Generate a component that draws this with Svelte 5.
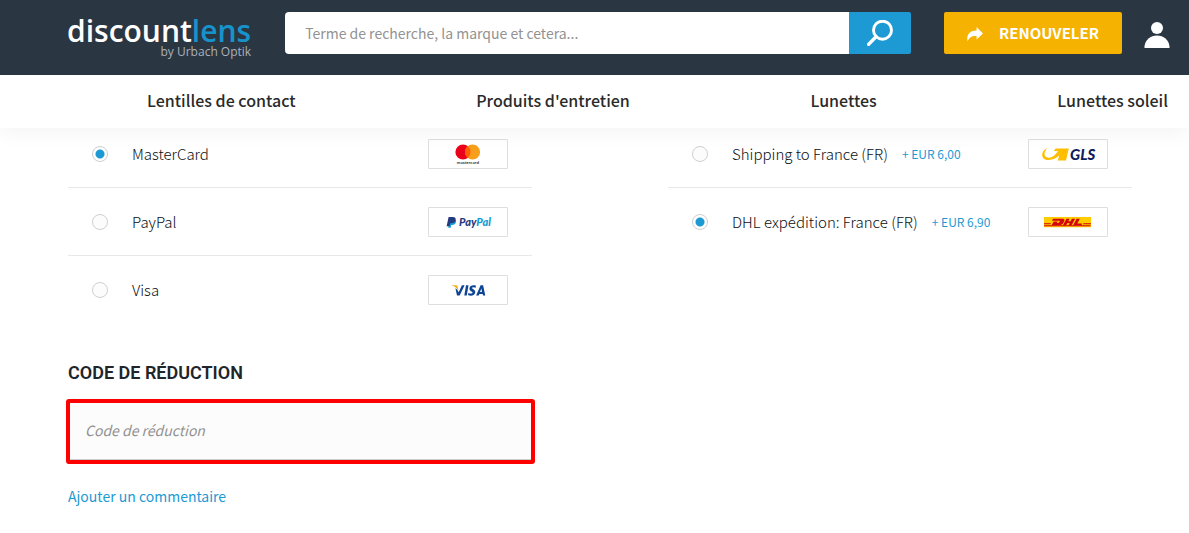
<script lang="ts">
  const menu = ['Lentilles de contact', "Produits d'entretien", 'Lunettes', 'Lunettes soleil'];

  const groups = [
    {
      name: 'payment',
      title: 'Paiement',
      options: [
        { id: 'mastercard', label: 'MasterCard', price: '' },
        { id: 'paypal', label: 'PayPal', price: '' },
        { id: 'visa', label: 'Visa', price: '' },
      ],
    },
    {
      name: 'shipping',
      title: 'Livraison',
      options: [
        { id: 'gls', label: 'Shipping to France (FR)', price: '+ EUR 6,00' },
        { id: 'dhl', label: 'DHL expédition: France (FR)', price: '+ EUR 6,90' },
      ],
    },
  ];

  let selected: Record<string, string> = $state({ payment: 'mastercard', shipping: 'dhl' });
</script>

{#snippet brand(id: string)}
  <svg class="brand" viewBox="0 0 78 28" aria-hidden="true">
    {#if id === 'mastercard'}
      <circle cx="34" cy="12" r="7.6" fill="#eb001b" />
      <circle cx="43.5" cy="12" r="7.6" fill="#f79e1b" />
      <path d="M38.75 6.1a7.6 7.6 0 0 1 0 11.8a7.6 7.6 0 0 1 0-11.8z" fill="#ff5f00" />
      <text x="38.8" y="23.5" text-anchor="middle" font-size="4.5" font-weight="700" fill="#333">mastercard</text>
    {:else if id === 'paypal'}
      <path d="M20.6 11h3.8c2.2 0 3 1.3 2.6 3.1-.4 2-1.8 2.9-3.8 2.9h-1l-.5 2.7h-2.5z" fill="#179bd7" />
      <path d="M19.6 9h4.2c2.2 0 3.2 1.2 2.8 3-.4 2.2-2 3.2-4.1 3.2h-1.3l-.7 3h-2.9z" fill="#253b80" />
      <text x="30" y="18" font-size="11" font-weight="900" font-style="italic" fill="#253b80">Pay<tspan fill="#179bd7">Pal</tspan></text>
    {:else if id === 'visa'}
      <path d="M22.8 9.2h4c1 0 1.5.4 1.7 1.2l1 4.4c-1.6-2.7-3.500-4.500-6.700-5.300z" fill="#f2ae14" />
      <path d="M26.400 12.200l1.600 7.300h2.700l4.900-10.200h-2.700l-3.200 6.900c-.700-1.800-1.800-3.200-3.300-4z" fill="#0e4595" />
      <path d="M37 9.300h2.500l-1.700 10.200h-2.500z" fill="#0e4595" />
      <path d="M47 9.700l-.4 2.100c-1.600-.7-3.500-.7-3.500.2 0 1.100 3.200 1.400 3.200 4 0 3.400-4.200 4.400-7.300 3.100l.4-2.200c2 1 4.200.8 4.200-.3s-3.200-1.400-3.200-3.900c0-3.200 3.800-4.200 6.600-3z" fill="#0e4595" />
      <path fill-rule="evenodd" d="M51.6 9.300h2.500l2.200 10.200H54l-.3-1.500h-3.300l-.7 1.500h-2.600zM52.3 12.500l-1.300 3.600h2z" fill="#0e4595" />
    {:else if id === 'gls'}
      <path d="M18.500 7.800c-7 3-7.400 12.400 1.200 12.300 4.500-.1 8.200-2.400 10.600-4.500l-1.500 4.900H37l2.800-12H26.600l-1.800 2.600h4.300c-2.800 4.500-6.600 7-9.800 6.600-5-.6-4.700-5.900-.8-9.900z" fill="#ffbe00" />
      <text x="41" y="20" font-size="15" font-weight="900" font-style="italic" fill="#0d1e5b">GLS</text>
    {:else}
      <path d="M15 9h47v10.200H15z" fill="#ffcc00" />
      <path d="M15 15.300h7l-.6 1H15zM15 17.200h46.500v1H15zM54.500 15.300H62v1h-8z" fill="#d40511" />
      <path fill-rule="evenodd" d="M24 10.800h9.300c2.400 0 2.500 1.600 1.600 3.100-1.100 2.200-2.500 3.300-5 3.300h-7.300l2.100-3.800h4l-.9 1.700h.9c1 0 1.500-.6 2-1.500.3-.7.1-.8-.7-.8h-7z" fill="#d40511" />
      <path d="M37.400 10.800h3.200l-1.300 2.500h2.300l1.300-2.500h3.200l-3.600 6.600h-3.200l1.400-2.500h-2.300L37 17.400h-3.200zM47.600 10.800h3.200l-2.500 4.600h5l-1.100 2h-8.200z" fill="#d40511" />
    {/if}
  </svg>
{/snippet}

<header>
  <div class="top">
    <a class="logo" href="#home" aria-label="discountlens by Urbach Optik">
      <span class="name">discount<b>lens</b></span>
      <span class="tag">by Urbach Optik</span>
    </a>
    <form class="search" role="search" onsubmit={(e) => e.preventDefault()}>
      <input type="search" aria-label="Recherche" placeholder="Terme de recherche, la marque et cetera..." />
      <button type="submit" aria-label="Rechercher">
        <svg width="26" height="26" viewBox="0 0 26 26" fill="none" stroke="#fff">
          <circle cx="15.5" cy="10.2" r="9" stroke-width="2.9" />
          <path d="M9 16.8L1.6 24.4" stroke-width="3.4" stroke-linecap="round" />
        </svg>
      </button>
    </form>
    <button class="renew" type="button">
      <svg width="16" height="16" viewBox="0 -2 16 16" fill="#fff" aria-hidden="true">
        <path d="M9.6 0L16 6.4 9.6 12.6V9.2C5.6 8.5 2.7 9.8.6 14-.9 8 2.7 3.3 9.6 3.4z" />
      </svg>
      RENOUVELER
    </button>
    <a class="user" href="#account" aria-label="Compte">
      <svg width="26" height="26" viewBox="0 0 26 26" fill="#fff">
        <circle cx="13" cy="6" r="6" />
        <path d="M.5 26V24.5C1 18 6.5 13.5 13 13.5S25 18 25.5 24.5V26z" />
      </svg>
    </a>
  </div>
  <nav>
    {#each menu as item}
      <a href="#menu">{item}</a>
    {/each}
  </nav>
</header>

<main>
  {#each groups as group}
    <div class="options" role="radiogroup" aria-label={group.title}>
      {#each group.options as option}
        <label class="option">
          <input type="radio" name={group.name} value={option.id} bind:group={selected[group.name]} />
          <span class="label">{option.label}</span>
          {#if option.price}<span class="price">{option.price}</span>{/if}
          {@render brand(option.id)}
        </label>
      {/each}
    </div>
  {/each}
  <section class="coupon">
    <h2><label for="code">CODE DE RÉDUCTION</label></h2>
    <div class="field">
      <input id="code" type="text" placeholder="Code de réduction" />
    </div>
    <a href="#comment">Ajouter un commentaire</a>
  </section>
</main>

<style>
  :global(body) {
    margin: 0;
    background: #fff;
    color: #212429;
    font: 14px/20px 'Noto Sans CJK SC', 'Noto Sans', sans-serif;
  }

  a {
    color: #1d9ad3;
    text-decoration: none;
  }

  input,
  button {
    box-sizing: border-box;
    margin: 0;
    border: 0;
    font: inherit;
  }

  header {
    position: relative;
    z-index: 1;
    box-shadow: 0 4px 20px rgba(0, 0, 0, 0.05);
  }

  .top {
    display: flex;
    align-items: center;
    box-sizing: border-box;
    height: 75px;
    padding: 0 19px 9px 67px;
    background: #2b3643;
  }

  .logo {
    display: flex;
    flex-direction: column;
    align-items: flex-end;
    margin-right: 34px;
    padding-top: 8px;
    font-family: 'Open Sans', sans-serif;
    color: #fff;
  }

  .name {
    font-size: 30px;
    line-height: 30px;
    font-weight: 600;
  }

  .name b {
    color: #1793cc;
    font-weight: 600;
  }

  .tag {
    color: #aab1b9;
    font-size: 12px;
    line-height: 12px;
    font-weight: 400;
  }

  .search {
    display: flex;
    flex: 1;
    height: 42px;
  }

  .search input {
    flex: 1;
    min-width: 0;
    padding: 0 20px;
    border-radius: 4px 0 0 4px;
    background: #fff;
    appearance: none;
    outline: 0;
  }

  .search input::placeholder {
    color: #929292;
    opacity: 1;
  }

  .search button {
    display: flex;
    align-items: center;
    justify-content: center;
    width: 62px;
    border-radius: 0 2px 2px 0;
    background: #1d9ad3;
  }

  .renew {
    display: flex;
    align-items: center;
    justify-content: center;
    gap: 16px;
    width: 178px;
    height: 42px;
    margin: 0 22px 0 33px;
    padding: 0;
    border-radius: 2px;
    background: #f6b200;
    color: #fff;
    font-size: 15px;
    font-weight: 700;
  }

  .user {
    display: flex;
    padding-top: 4px;
  }

  nav {
    display: flex;
    align-items: center;
    justify-content: space-between;
    box-sizing: border-box;
    height: 53px;
    padding: 0 21px 4px 147px;
    background: #fff;
  }

  nav a {
    color: #2a2a2a;
    font-size: 16px;
    font-weight: 500;
  }

  main {
    display: grid;
    grid-template-columns: 1fr 1fr;
    column-gap: 136px;
    margin-top: -8px;
    padding: 0 57px 24px 68px;
  }

  .option {
    display: flex;
    align-items: center;
    box-sizing: border-box;
    height: 68px;
    padding: 0 24px;
    border-bottom: 1px solid #e6e8e9;
  }

  .option:last-child {
    border-bottom-color: transparent;
  }

  .option input {
    width: 16px;
    height: 16px;
    margin-right: 24px;
    border: 1px solid #cfcfcf;
    border-radius: 50%;
    background: #fcfcfc;
    appearance: none;
  }

  .option input:checked {
    background: radial-gradient(circle, #1d9ad3 4px, #fff 5px);
  }

  .label {
    color: #0c0e11;
    font-size: 15px;
    font-weight: 300;
  }

  .price {
    margin-left: 14px;
    color: #1d9ad3;
    font-size: 12px;
  }

  .brand {
    box-sizing: border-box;
    width: 80px;
    height: 30px;
    margin-left: auto;
    border: 1px solid #dedede;
    border-radius: 1px;
    background: #fff;
    font-family: Lato, sans-serif;
  }

  .coupon {
    grid-column: 1;
    padding-top: 39px;
  }

  h2 {
    margin: 0 0 16px;
    font: 600 18px/20px Roboto, sans-serif;
  }

  .field {
    display: flex;
    margin: 0 -3px 22px -2px;
    border: 4px solid #fe0000;
    border-radius: 3px;
  }

  .field input {
    width: 100%;
    height: 57px;
    padding: 0 15px 2px;
    border-bottom: 1px solid #ccc;
    background: #fcfcfc;
    outline: 0;
  }

  .field input::placeholder {
    color: #929292;
    font-style: italic;
    opacity: 1;
  }
</style>
